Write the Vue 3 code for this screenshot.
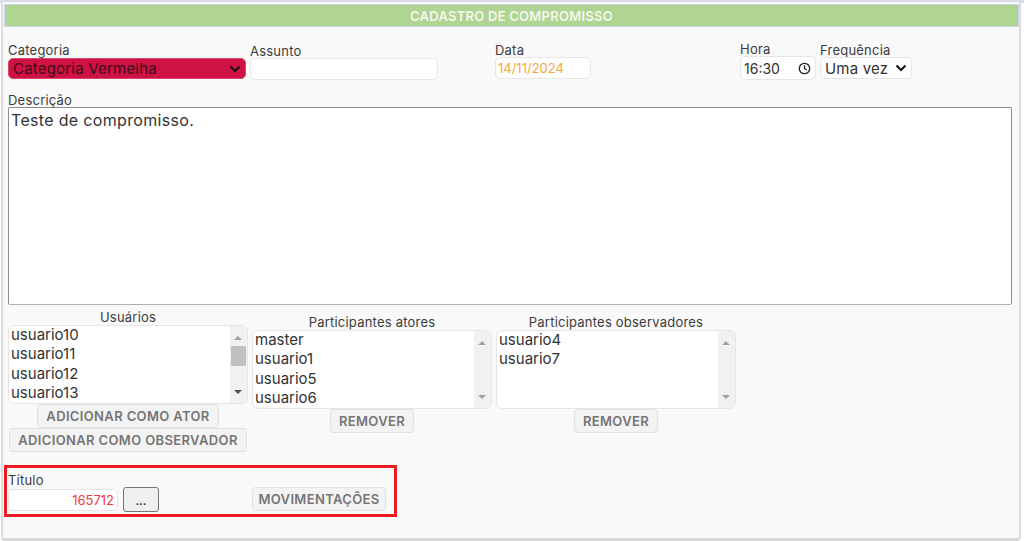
<template>
  <div class="page">
    <div class="panel">
      <h1 class="title">CADASTRO DE COMPROMISSO</h1>

      <div class="top-row">
        <div class="field f-cat">
          <label>Categoria</label>
          <div class="select red">
            <span>Categoria Vermelha</span>
            <svg width="14" height="14" viewBox="0 0 14 14"><path d="M2.5 4.5 7 9l4.5-4.5" /></svg>
          </div>
        </div>
        <div class="field f-assunto">
          <label>Assunto</label>
          <input type="text" class="input" />
        </div>
        <div class="field f-data">
          <label>Data</label>
          <div class="input date">14/11/2024</div>
        </div>
        <div class="field f-hora">
          <label>Hora</label>
          <div class="input time">
            <span>16:30</span>
            <svg width="13" height="13" viewBox="0 0 13 13"><circle cx="6.5" cy="6.5" r="5.2" /><path d="M6.5 3.2v3.5l2.3 1.3" /></svg>
          </div>
        </div>
        <div class="field f-freq">
          <label>Frequência</label>
          <div class="select">
            <span>Uma vez</span>
            <svg width="14" height="14" viewBox="0 0 14 14"><path d="M2.5 4.5 7 9l4.5-4.5" /></svg>
          </div>
        </div>
      </div>

      <div class="desc">
        <label>Descrição</label>
        <div class="textarea">Teste de compromisso.</div>
      </div>

      <div class="lists">
        <div class="list-col first">
          <div class="list-label">Usuários</div>
          <div class="listbox">
            <div class="items">
              <div v-for="u in usuarios" :key="u">{{ u }}</div>
            </div>
            <div class="scroll">
              <i class="up"></i>
              <b class="thumb"></b>
              <i class="down darker"></i>
            </div>
          </div>
          <button class="btn">ADICIONAR COMO ATOR</button>
          <button class="btn">ADICIONAR COMO OBSERVADOR</button>
        </div>
        <div class="list-col">
          <div class="list-label">Participantes atores</div>
          <div class="listbox">
            <div class="items">
              <div v-for="u in atores" :key="u">{{ u }}</div>
            </div>
            <div class="scroll">
              <i class="up"></i>
              <i class="down"></i>
            </div>
          </div>
          <button class="btn">REMOVER</button>
        </div>
        <div class="list-col">
          <div class="list-label">Participantes observadores</div>
          <div class="listbox">
            <div class="items">
              <div v-for="u in observadores" :key="u">{{ u }}</div>
            </div>
            <div class="scroll">
              <i class="up"></i>
              <i class="down"></i>
            </div>
          </div>
          <button class="btn">REMOVER</button>
        </div>
      </div>

      <div class="titulo-row">
        <div class="field f-titulo">
          <label>Título</label>
          <div class="input numero">165712</div>
        </div>
        <button class="dots">...</button>
        <button class="btn mov">MOVIMENTAÇÕES</button>
      </div>

      <div class="highlight"></div>
    </div>
  </div>
</template>

<script setup>
const usuarios = ['usuario10', 'usuario11', 'usuario12', 'usuario13']
const atores = ['master', 'usuario1', 'usuario5', 'usuario6']
const observadores = ['usuario4', 'usuario7']
</script>

<style>
html, body {
  margin: 0;
  background: #fff;
  overflow: hidden;
}
</style>

<style scoped>
.page {
  width: 1024px;
  height: 541px;
  box-sizing: border-box;
  padding: 2px 3px 0 1px;
  background: linear-gradient(#dcdce6 0, #dcdce6 3px, #fff 3px);
  font-family: Inter, sans-serif;
  color: #333;
}

.panel {
  position: relative;
  height: 539px;
  box-sizing: border-box;
  background: #f9f9f9;
  border-right: 2px solid #ddd;
  border-bottom: 3px solid #d8d8d8;
  border-left: 2px solid #ddd;
  border-radius: 0 0 4px 4px;
  padding: 2px 0 0 1px;
}

.title {
  margin: 0;
  height: 23px;
  line-height: 23px;
  background: #b0d492;
  border: 1px solid #c8d6e8;
  box-sizing: border-box;
  text-align: center;
  color: #f4f8ee;
  font-size: 13px;
  font-weight: 600;
  letter-spacing: 0.25px;
}

label,
.list-label {
  display: block;
  font-size: 13px;
  line-height: 14px;
  letter-spacing: 0.22px;
  color: #3c3c3c;
}

.top-row {
  display: flex;
  align-items: flex-end;
  height: 52px;
  padding-left: 4px;
}

.field {
  display: flex;
  flex-direction: column;
}

.f-cat { width: 238px; margin-right: 4px; }
.f-cat label { margin-bottom: 1px; }
.f-assunto { width: 188px; margin-right: 57px; margin-bottom: -1px; }
.f-data { width: 96px; margin-right: 149px; }
.f-hora { width: 76px; margin-right: 4px; margin-bottom: -1px; }
.f-freq { width: 92px; }

.input,
.select {
  box-sizing: border-box;
  height: 22px;
  border: 1px solid #e6e6e6;
  border-radius: 5px;
  background: #fff;
  font-family: inherit;
  display: flex;
  align-items: center;
  font-size: 14px;
}

.select {
  justify-content: space-between;
  padding: 0 3px 0 4px;
  color: #333;
  font-size: 15px;
  letter-spacing: 0.2px;
}

.select svg {
  fill: none;
  stroke: #111;
  stroke-width: 2;
}

.select.red {
  height: 21px;
  background: #d01144;
  border-color: #d4466c;
  color: #3a0c18;
}

.date {
  color: #f5a63c;
  height: 22px;
  padding-left: 2px;
  font-size: 13px;
}

.time {
  height: 24px;
  justify-content: space-between;
  padding: 0 4px 0 3px;
}

.time svg {
  fill: none;
  stroke: #222;
  stroke-width: 1.3;
}

.desc {
  padding: 14px 4px 0;
}

.textarea {
  box-sizing: border-box;
  width: 1004px;
  height: 198px;
  background: #fff;
  border: 1px solid #8c8c8c;
  border-bottom-color: #b0b0b0;
  border-radius: 2px;
  padding: 2px 2px;
  font-size: 16px;
  letter-spacing: 0.33px;
  line-height: 20px;
  color: #333;
}

.lists {
  display: flex;
  align-items: flex-start;
  gap: 4px;
  padding: 5px 0 0 4px;
}

.list-col {
  width: 240px;
  display: flex;
  flex-direction: column;
  align-items: center;
  padding-top: 5px;
}

.list-col.first {
  padding-top: 0;
}

.list-label {
  text-align: center;
  line-height: 15px;
}

.listbox {
  box-sizing: border-box;
  width: 100%;
  height: 79px;
  display: flex;
  background: #fff;
  border: 1px solid #e6e6e6;
  border-radius: 6px;
  overflow: hidden;
}

.items {
  flex: 1;
  margin-top: -1px;
  padding-left: 2px;
  font-size: 15px;
  line-height: 19.3px;
  color: #333;
}

.scroll {
  width: 17px;
  background: #f1f1f1;
  position: relative;
}

.scroll i {
  position: absolute;
  left: 4px;
  width: 0;
  height: 0;
  border-left: 4px solid transparent;
  border-right: 4px solid transparent;
}

.scroll .up {
  top: 10px;
  border-bottom: 4px solid #a3a3a3;
}

.scroll .down {
  bottom: 9px;
  border-top: 4px solid #a3a3a3;
}

.scroll .down.darker {
  border-top-color: #505050;
}

.thumb {
  position: absolute;
  left: 1px;
  top: 20px;
  width: 15px;
  height: 20px;
  background: #c1c1c1;
}

.btn {
  box-sizing: border-box;
  height: 24px;
  padding: 0 8px;
  background: #f3f3f3;
  border: 1px solid #e0e0e0;
  border-radius: 4px;
  color: #757575;
  font-family: inherit;
  font-size: 13px;
  font-weight: 600;
  letter-spacing: 0.36px;
  white-space: nowrap;
}

.titulo-row {
  display: flex;
  align-items: flex-end;
  padding: 21px 0 0 4px;
}

.f-titulo { width: 110px; margin-right: 5px; margin-bottom: 1px; }
.f-titulo label { margin-bottom: 2px; }

.numero {
  height: 22px;
  justify-content: flex-end;
  padding-right: 3px;
  color: #f03a3a;
  font-size: 13px;
}

.dots {
  box-sizing: border-box;
  width: 36px;
  height: 25px;
  background: #efefef;
  border: 1px solid #767676;
  border-radius: 3px;
  font-family: inherit;
  font-size: 13px;
  color: #222;
  margin-right: 93px;
}

.mov {
  width: 134px;
  padding: 0;
  margin-bottom: 1px;
}

.highlight {
  position: absolute;
  left: 1px;
  top: 463px;
  width: 393px;
  height: 52px;
  box-sizing: border-box;
  border: 3px solid #ed1c24;
  pointer-events: none;
}
</style>
